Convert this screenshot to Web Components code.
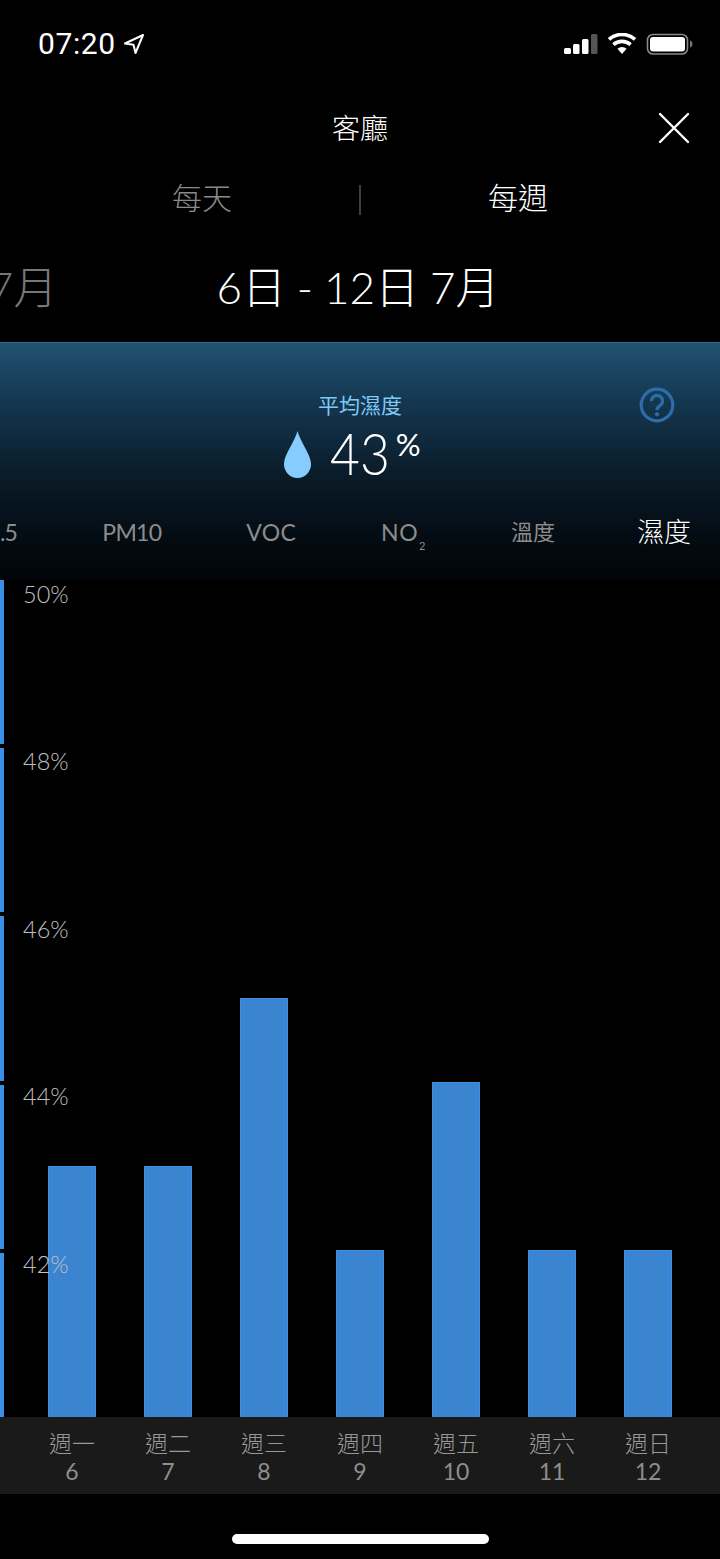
<!DOCTYPE html>
<html lang="zh-Hant"><head><meta charset="utf-8"><style>
html,body{margin:0;background:#000;width:720px;height:1559px;overflow:hidden}
body{font-family:Lato,"Noto Sans CJK TC",sans-serif;color:#fff}
</style></head><body>
<stats-page></stats-page>
<script>
const FONT='Lato,"Noto Sans CJK TC",sans-serif';
function def(name,html,init){customElements.define(name,class extends HTMLElement{constructor(){super();this.attachShadow({mode:'open'}).innerHTML=html;}connectedCallback(){init&&init(this)}})}
def('status-bar',`<style>
:host{display:flex;height:88px;box-sizing:border-box;padding:0 26px 0 38px;align-items:flex-start;justify-content:space-between}
.l{display:flex;align-items:center;gap:7px;margin-top:27px}
.t{font:400 30px/34px Roboto,sans-serif;letter-spacing:.6px}
.r{margin-top:33px;display:block}
</style><div class="l"><span class="t">07:20</span>
<svg width="22" height="22" viewBox="0 0 22 22" fill="none" stroke="#fff" stroke-width="2" stroke-linejoin="round"><path d="M20 2 2 10.5l8.5 1.2L12.5 20z"/></svg></div>
<svg class="r" width="130" height="22" viewBox="564 33 130 22">
<rect x="564" y="48" width="7" height="6" rx="1.5" fill="#fff"/><rect x="573" y="44" width="6.5" height="10" rx="1.5" fill="#fff"/><rect x="582" y="39" width="6.5" height="15" rx="1.5" fill="#fff"/><rect x="591" y="34" width="6.5" height="20" rx="1.5" fill="#555"/>
<path d="M622 54l-4.6-5.2a7 7 0 0 1 9.2 0z" fill="#fff"/>
<path d="M613.4 44.6a13 13 0 0 1 17.2 0M609 39.400a19.500 19.500 0 0 1 26 0" fill="none" stroke="#fff" stroke-width="3.600"/>
<rect x="647.500" y="34.500" width="40" height="19.500" rx="5.500" fill="none" stroke="#8a8a8a" stroke-width="1.600"/><rect x="650" y="37" width="35" height="14.500" rx="3" fill="#fff"/>
<path d="M690 40.500c1.800.5 2.500 2 2.500 3.500s-.7 3-2.500 3.500z" fill="#777"/>
</svg>`);
def('title-bar',`<style>
:host{display:grid;grid-template-columns:1fr auto 1fr;height:80px;align-items:center;padding:0 30px 0 0;font:300 28px/40px ${FONT}}
svg{justify-self:end;display:block}
.a{grid-column:2;margin-left:30px}
</style><span class="a"><slot></slot></span><svg width="32" height="32" viewBox="0 0 32 32" stroke="#fff" stroke-width="2.400" stroke-linecap="round"><path d="M2 2 30 30M30 2 2 30"/></svg>`);
def('period-tabs',`<style>
:host{display:grid;grid-template-columns:1fr 2px 1fr;height:60px;align-items:center;font:300 30px/38px ${FONT}}
span{text-align:center;color:#8a8a8a;padding-bottom:2px}
.d{text-align:right;padding-right:127px;}
.w{text-align:left;padding-left:127px;color:#fff}
i{display:block;width:2px;height:30px;background:#3f3f3f;margin-top:4px}
</style><span class="d">每天</span><i></i><span class="w">每週</span>`);
def('date-row',`<style>
:host{display:grid;grid-template-columns:minmax(0,1fr) auto minmax(0,1fr);height:114px;box-sizing:border-box;padding-top:4px;align-items:center;overflow:hidden;font:300 44px/56px ${FONT};white-space:nowrap;word-spacing:-1px}
.p{color:#777;justify-self:end;margin-right:159px}
.m{margin-right:4px}
</style><span class="p">7月</span><span class="m">6日 - 12日 7月</span><span></span>`);
def('humidity-panel',`<style>
:host{display:block;height:238px;box-sizing:border-box;border-top:1px solid #2b6f9b;background:linear-gradient(#215271 0,#143750 25%,#0a1c2a 55%,#030a10 85%,#01050a 100%);position:relative}
.h{padding-top:46px;text-align:center;color:#7fc9f5;font:400 21px/32px ${FONT}}
.v{display:flex;justify-content:center;align-items:flex-start;height:58px;margin-top:10px;padding-right:17px}
.n{font:300 58px/58px ${FONT};margin-left:18px;margin-right:-7px;margin-top:-7px;transform:scaleX(.89);transform-origin:0 0;display:block}
.s{font:400 31px/30px ${FONT};margin-left:5px;margin-top:-2px;letter-spacing:-1px}
.q{position:absolute;right:45px;top:44px}
.tabs{display:flex;justify-content:flex-end;gap:85px;padding-right:29px;margin-top:23px;height:40px;align-items:center;color:#8c8c8c;font:400 23px/40px ${FONT};white-space:nowrap;overflow:hidden}
.on{color:#fff;font-size:27px;margin-left:-3px;font-weight:300}
.c{font-size:22px}
sub{font-size:11px;line-height:0;vertical-align:-9px;margin-left:1px}
</style>
<div class="h">平均濕度</div>
<div class="v"><svg class="d" width="29" height="47" viewBox="0 0 30 47" preserveAspectRatio="none"><path d="M15 0C12 11 1 24 1 33a14 14 0 0 0 28 0C29 24 18 11 15 0z" fill="#86ccff"/></svg><span class="n">43</span><span class="s">%</span></div>
<svg class="q" width="36" height="36" viewBox="0 0 36 36"><circle cx="18" cy="18" r="15.800" fill="none" stroke="#2b6ea8" stroke-width="3.200"/><path d="M12.500 14a5.500 5.500 0 1 1 8.700 4.400c-2 1.500-3.200 2.300-3.200 4.600" fill="none" stroke="#2b6ea8" stroke-width="3.200"/><circle cx="18" cy="27.300" r="2.100" fill="#2b6ea8"/></svg>
<div class="tabs"><span style="letter-spacing:-.7px">PM2.5</span><span style="letter-spacing:-.7px">PM10</span><span style="letter-spacing:.3px">VOC</span><span style="letter-spacing:.5px">NO<sub>2</sub></span><span class="c">溫度</span><span class="on">濕度</span></div>`);
def('y-scale',`<style>
:host{position:absolute;inset:0;z-index:1;pointer-events:none}
.s{position:absolute;inset:0;display:grid;grid-template-rows:repeat(5,1fr);gap:4px}
.s i{background:#3a8ee6;width:4px}
.l{position:absolute;inset:0 0 0 23px;display:flex;flex-direction:column;color:#c0c0c0;font:300 23.500px/28px ${FONT}}
.l span{height:167.4px;flex:none}
</style><div class="s"><i></i><i></i><i></i><i></i><i></i></div><div class="l"><span>50%</span><span>48%</span><span>46%</span><span>44%</span><span>42%</span></div>`);
def('bar-chart',`<style>
:host{display:flex;height:837px;padding:0 24px;position:relative;align-items:flex-end;box-sizing:border-box}
b{flex:1;display:flex;justify-content:center;align-items:flex-end;height:100%}
i{display:block;width:48px;box-sizing:border-box;background:#3a84d0;border:1px solid #3c8fe8;border-bottom:0}
</style><y-scale></y-scale>
<b><i style="height:251px"></i></b><b><i style="height:251px"></i></b><b><i style="height:419px"></i></b><b><i style="height:167px"></i></b><b><i style="height:335px"></i></b><b><i style="height:167px"></i></b><b><i style="height:167px"></i></b>`);
def('day-axis',`<style>
:host{display:flex;height:77px;padding:12px 24px 0;background:#1a1a1a;color:#989898;box-sizing:border-box;font:300 23px/28px ${FONT}}
span{flex:1;text-align:center}
em{font-style:normal;font-weight:400;color:#8e8e8e}
</style>${[['一',6],['二',7],['三',8],['四',9],['五',10],['六',11],['日',12]].map(d=>`<span>週${d[0]}<br><em>${d[1]}</em></span>`).join('')}`);
def('home-bar',`<style>
:host{display:flex;justify-content:center;padding-top:40px}
i{display:block;width:257px;height:10px;border-radius:5px;background:#fff}
</style><i></i>`);
def('stats-page',`<style>:host{display:block;width:720px;height:1559px;background:#000;overflow:hidden}</style>
<status-bar></status-bar><title-bar>客廳</title-bar><period-tabs></period-tabs><date-row></date-row><humidity-panel></humidity-panel><bar-chart></bar-chart><day-axis></day-axis><home-bar></home-bar>`);
</script></body></html>
